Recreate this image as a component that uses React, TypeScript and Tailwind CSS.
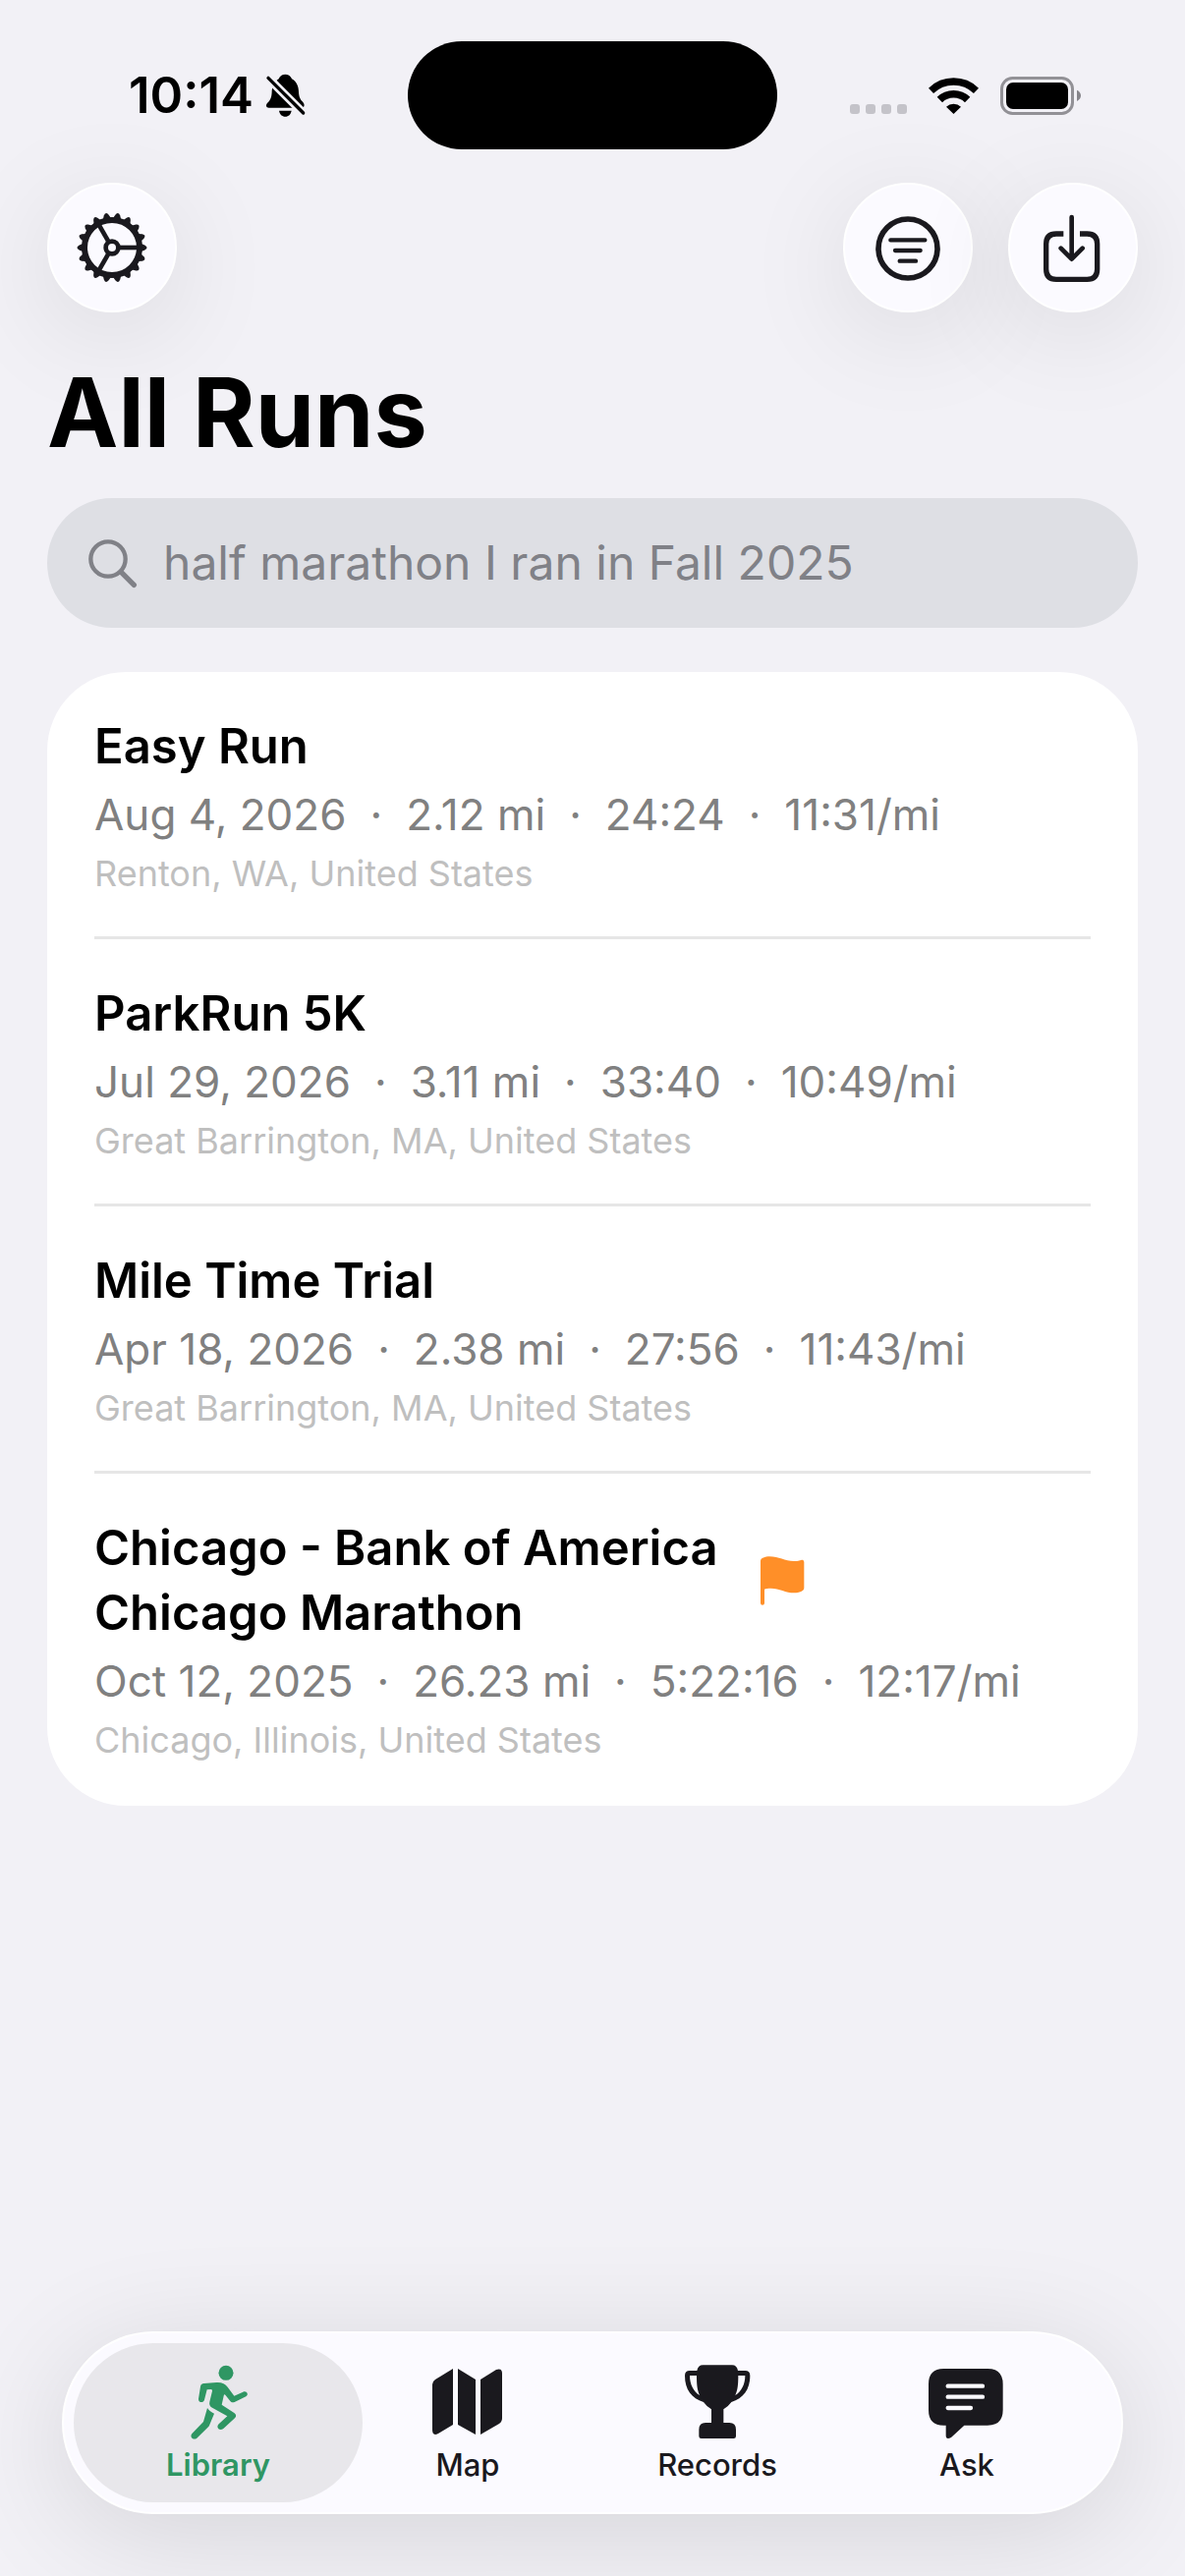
import { useState, type ReactNode } from "react";

interface Run {
  title: string;
  date: string;
  distance: string;
  duration: string;
  pace: string;
  location: string;
  race?: boolean;
}

const RUNS: Run[] = [
  {
    title: "Easy Run",
    date: "Aug 4, 2026",
    distance: "2.12 mi",
    duration: "24:24",
    pace: "11:31/mi",
    location: "Renton, WA, United States",
  },
  {
    title: "ParkRun 5K",
    date: "Jul 29, 2026",
    distance: "3.11 mi",
    duration: "33:40",
    pace: "10:49/mi",
    location: "Great Barrington, MA, United States",
  },
  {
    title: "Mile Time Trial",
    date: "Apr 18, 2026",
    distance: "2.38 mi",
    duration: "27:56",
    pace: "11:43/mi",
    location: "Great Barrington, MA, United States",
  },
  {
    title: "Chicago - Bank of America Chicago Marathon",
    date: "Oct 12, 2025",
    distance: "26.23 mi",
    duration: "5:22:16",
    pace: "12:17/mi",
    location: "Chicago, Illinois, United States",
    race: true,
  },
];

const TEETH = Array.from({ length: 18 }, (_, i) => i * 20);

function BellOffIcon() {
  return (
    <svg viewBox="509 139 126 132" className="h-[44px] w-[42px]" aria-hidden="true">
      <path d="M570 141C580 141 587 147 590 155C604 162 611 178 611 196C612 212 617 219 624 226C630 233 629 243 620 243H520C511 243 510 234 515 229C524 221 528 213 529 196C529 178 538 161 550 155C553 147 560 141 570 141Z" />
      <path d="M551 252H589C587 263 580 270 570 270C560 270 553 263 551 252Z" />
      <path d="M512 146L632 266" stroke="#f2f1f6" strokeWidth="26" />
      <path d="M518 152L625 259" stroke="#000" strokeWidth="10" strokeLinecap="round" />
    </svg>
  );
}

function SignalIcon() {
  return (
    <svg viewBox="255 144 174 117" className="h-[39px] w-[58px]" fill="#c4c3c9" aria-hidden="true">
      <rect x="255" y="228" width="30" height="30" rx="9" />
      <rect x="303" y="228" width="30" height="30" rx="9" />
      <rect x="351" y="228" width="30" height="30" rx="9" />
      <rect x="399" y="228" width="30" height="30" rx="9" />
    </svg>
  );
}

function WifiIcon() {
  return (
    <svg viewBox="495 144 153 117" className="h-[39px] w-[51px]" fill="none" stroke="#000" aria-hidden="true">
      <path d="M502.500 187A99 99 0 0 1 640.500 187" strokeWidth="22" />
      <path d="M529 214.500A61 61 0 0 1 614 214.500" strokeWidth="23" />
      <path d="M571.500 258L549 236A33 33 0 0 1 594 236Z" fill="#000" stroke="none" />
    </svg>
  );
}

function BatteryIcon() {
  return (
    <svg viewBox="714 144 246 117" className="h-[39px] w-[82px]" aria-hidden="true">
      <rect x="718.500" y="148.500" width="216" height="108" rx="33" fill="none" stroke="#929196" strokeWidth="9" />
      <rect x="732" y="162" width="189" height="81" rx="21" />
      <path d="M948 185C956 189 960 195 960 202C960 209 956 215 948 219Z" fill="#86858a" />
    </svg>
  );
}

function GearIcon() {
  return (
    <svg viewBox="142 140 216 216" className="size-[72px]" fill="none" stroke="currentColor" aria-hidden="true">
      <g transform="translate(250 248)">
        <circle r="84" strokeWidth="18" />
        <circle r="19" strokeWidth="14" />
        {TEETH.map((a) => (
          <path key={a} d="M88 -13L101 -7Q112 0 101 7L88 13Z" fill="currentColor" stroke="none" transform={`rotate(${a})`} />
        ))}
        <path d="M24 0H80" strokeWidth="14" />
        <path d="M24 0H80" strokeWidth="14" transform="rotate(120)" />
        <path d="M24 0H80" strokeWidth="14" transform="rotate(240)" />
      </g>
    </svg>
  );
}

function FilterIcon() {
  return (
    <svg viewBox="174 138 216 216" className="size-[72px]" fill="none" stroke="currentColor" strokeLinecap="round" aria-hidden="true">
      <circle cx="282" cy="249" r="90" strokeWidth="17" />
      <path d="M229 223H334M243 255H320M257 287H306" strokeWidth="13" />
    </svg>
  );
}

function ImportIcon() {
  return (
    <svg viewBox="678 138 216 216" className="size-[72px]" fill="none" stroke="currentColor" aria-hidden="true">
      <path d="M757 204H735Q704 204 704 235V312Q704 343 735 343H829Q860 343 860 312V235Q860 204 829 204H807" strokeWidth="16" />
      <path d="M782 153V280M749 248L782 281L815 248" strokeWidth="14" strokeLinecap="round" strokeLinejoin="round" />
    </svg>
  );
}

function SearchIcon() {
  return (
    <svg viewBox="174 558 156 156" className="size-[52px] shrink-0" fill="none" stroke="#808187" strokeLinecap="round" aria-hidden="true">
      <circle cx="240" cy="624" r="53" strokeWidth="13" />
      <path d="M280 664L319 703" strokeWidth="16" />
    </svg>
  );
}

function FlagIcon() {
  return (
    <svg viewBox="102 70 135 150" className="h-[50px] w-[45px] shrink-0" fill="#ff8f28" role="img" aria-label="Race">
      <path d="M102 84C102 76 116 71 130 71C158 71 176 85 204 85C218 85 224 81 230 81Q235 82 235 88V167C235 177 220 182 205 182C178 182 160 168 134 168C124 168 118 169 114 171V213Q114 219 108 219Q102 219 102 213Z" />
    </svg>
  );
}

function RunnerIcon() {
  return (
    <svg viewBox="45 36 252 234" className="h-[78px] w-[84px]" fill="currentColor" aria-hidden="true">
      <circle cx="195" cy="61" r="22.500" />
      <path d="M128 93L166 90C182 89 193 94 200 104L220 131L247 119C258 114 266 127 256 133L221 150C215 152 211 151 208 147L193 128Q189 124 188 131L182 158L220 183C227 188 227 194 222 199L187 231C175 240 163 227 173 217L199 193L153 167C146 163 143 157 145 149L153 116Q154 111 149 111L137 112L129 143C126 154 110 152 111 140L117 103C118 96 121 94 128 93Z" />
      <path d="M138 168C143 175 150 181 159 185L145 219Q144 223 141 226L106 260C95 268 82 256 92 245L126 210Z" />
    </svg>
  );
}

function MapIcon() {
  return (
    <svg viewBox="0 0 84 78" className="h-[78px] w-[84px]" fill="currentColor" aria-hidden="true">
      <path d="M6 20Q6 17 9 15L27 4V61L12 70Q6 73 6 66Z" />
      <path d="M32 4L50 15V71L32 61Z" />
      <path d="M55 15L71 5Q77 3 77 9V54Q77 58 74 60L55 71Z" />
    </svg>
  );
}

function TrophyIcon() {
  return (
    <svg viewBox="9 36 252 234" className="h-[78px] w-[84px]" fill="currentColor" aria-hidden="true">
      <path d="M91 37H180Q195 37 198 54H220Q235 54 235 69C235 113 214 138 178 150Q168 164 154 172V213H172Q192 213 192 234V254Q192 261 185 261H86Q79 261 79 254V234Q79 213 99 213H117V172Q103 164 93 150C57 138 36 113 36 69Q36 54 51 54H73Q76 37 91 37ZM72 69H51C51 95 62 118 81 129C74 114 72 98 72 69ZM199 69C199 98 197 114 190 129C209 118 220 95 220 69Z" />
    </svg>
  );
}

function ChatIcon() {
  return (
    <svg viewBox="771 36 252 234" className="h-[78px] w-[84px]" aria-hidden="true">
      <path d="M826 48H960Q1007 48 1007 95V174Q1007 221 960 221H889L849 258Q833 266 833 252V221H826Q780 221 780 174V95Q780 48 826 48Z" fill="currentColor" />
      <path d="M839 101H945M839 134H945M839 168H909" stroke="#fbfaff" strokeWidth="13" strokeLinecap="round" />
    </svg>
  );
}

function RoundButton({ label, children }: { label: string; children: ReactNode }) {
  return (
    <button
      type="button"
      aria-label={label}
      className="flex size-[132px] items-center justify-center rounded-full border-2 border-white bg-[#fbfaff] text-[#1a191e] shadow-[0_20px_110px_rgba(0,0,0,0.1)]"
    >
      {children}
    </button>
  );
}

function RunRow({ run }: { run: Run }) {
  const stats = [run.date, run.distance, run.duration, run.pace];
  return (
    <li className="flex flex-col gap-[6px] border-b-[3px] border-[#e6e6e6] pt-[43px] pb-[40px] last:border-transparent">
      <div className="flex items-center gap-6">
        <h2 className="max-w-[654px] text-[49px] leading-[66px] font-semibold text-black">{run.title}</h2>
        {run.race && <FlagIcon />}
      </div>
      <p className="flex gap-6 text-[44px] leading-[60px] whitespace-nowrap text-[#808080]">
        {stats.map((stat, i) => (
          <span key={i} className="flex gap-6">
            {i > 0 && <span>·</span>}
            {stat}
          </span>
        ))}
      </p>
      <p className="text-[36px] leading-[48px] text-[#bfbfbf]">{run.location}</p>
    </li>
  );
}

const TABS = [
  { id: "library", label: "Library", icon: <RunnerIcon /> },
  { id: "map", label: "Map", icon: <MapIcon /> },
  { id: "records", label: "Records", icon: <TrophyIcon /> },
  { id: "ask", label: "Ask", icon: <ChatIcon /> },
];

export default function App() {
  const [tab, setTab] = useState("library");
  const [query, setQuery] = useState("");

  const runs = RUNS.filter((r) => r.title.toLowerCase().includes(query.trim().toLowerCase()));

  return (
    <div className="flex min-h-screen flex-col overflow-x-hidden bg-[#f2f1f6] font-['Inter',sans-serif]">
      <div className="grid grid-cols-[1fr_376px_1fr] items-center pt-[42px]">
        <div className="flex items-center gap-3 pl-[131px]">
          <span className="text-[51px] leading-[66px] font-semibold text-black">10:14</span>
          <BellOffIcon />
        </div>
        <div className="h-[110px] rounded-full bg-black" />
        <div className="flex items-center justify-end gap-[22px] pr-[106px]">
          <SignalIcon />
          <WifiIcon />
          <BatteryIcon />
        </div>
      </div>

      <header className="mt-[34px] flex items-center justify-between px-12">
        <RoundButton label="Settings">
          <GearIcon />
        </RoundButton>
        <div className="flex gap-9">
          <RoundButton label="Filter">
            <FilterIcon />
          </RoundButton>
          <RoundButton label="Import">
            <ImportIcon />
          </RoundButton>
        </div>
      </header>

      <main className="px-12">
        <h1 className="mt-[42px] text-[97px] leading-[120px] font-bold text-black">All Runs</h1>

        <label className="mt-[27px] flex h-[132px] items-center gap-[26px] rounded-full bg-[#dedfe4] px-10">
          <SearchIcon />
          <input
            type="search"
            aria-label="Search runs"
            value={query}
            onChange={(e) => setQuery(e.target.value)}
            placeholder="half marathon I ran in Fall 2025"
            className="min-w-0 flex-1 bg-transparent text-[48px] leading-[66px] text-black outline-none placeholder:text-[#808187]"
          />
        </label>

        <ul className="mt-[45px] rounded-[80px] bg-white px-12">
          {runs.map((run) => (
            <RunRow key={run.title} run={run} />
          ))}
        </ul>
      </main>

      <nav className="mx-[63px] mt-auto mb-[63px] grid grid-cols-4 rounded-full border-2 border-white bg-[#fbfaff] px-[30px] py-[10px] shadow-[0_20px_120px_rgba(0,0,0,0.12)]">
        {TABS.map((t) => (
          <button
            key={t.id}
            type="button"
            onClick={() => setTab(t.id)}
            aria-current={tab === t.id ? "page" : undefined}
            className={
              tab === t.id
                ? "-mx-5 flex h-[162px] flex-col items-center rounded-full bg-[#e8e7eb] pt-[22px] font-semibold text-[#2f9663]"
                : "-mx-5 flex h-[162px] flex-col items-center rounded-full pt-[22px] font-medium text-[#1a191e]"
            }
          >
            {t.icon}
            <span className="mt-1 text-[31px] leading-[40px]">{t.label}</span>
          </button>
        ))}
      </nav>
    </div>
  );
}
